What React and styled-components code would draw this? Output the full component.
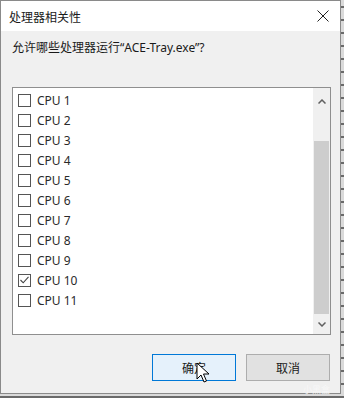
import React from "react";
import styled, { createGlobalStyle } from "styled-components";

const Global = createGlobalStyle`
  html, body { margin: 0; padding: 0; }
  body {
    width: 344px;
    height: 398px;
    overflow: hidden;
    background: #d6d6d6;
    font-family: "Noto Sans", "Noto Sans CJK SC", sans-serif;
  }
`;

/* ===== WINDOW ===== */
const Screen = styled.div`
  width: 344px;
  height: 398px;
  position: relative;
  background:
    repeating-linear-gradient(180deg, #dadada 0 6px, #6a6a6a 6px 8px, #dadada 8px 13px);
`;

const Dialog = styled.div`
  width: 339px;
  height: 392px;
  border: 1px solid #8a8a8a;
  background: #f0f0f0;
  display: flex;
  flex-direction: column;
`;

const TitleBar = styled.div`
  height: 30px;
  background: #ffffff;
  display: flex;
  align-items: center;
  justify-content: space-between;
  padding: 0 8px 0 8px;
  font-family: "Noto Sans CJK SC", sans-serif;
  font-size: 12px;
  color: #1a1a1a;
`;

const CloseBtn = styled.div`
  width: 14px;
  height: 14px;
  display: flex;
  align-items: center;
  justify-content: center;
  margin-right: 2px;
`;

const Body = styled.div`
  flex: 1;
  display: flex;
  flex-direction: column;
  padding: 9px 10px 0 11px;
`;

const Prompt = styled.div`
  font-family: "Noto Sans", "Noto Sans CJK SC", sans-serif;
  font-size: 12px;
  line-height: 16px;
  color: #1a1a1a;
  margin-bottom: 31px;
`;

/* ===== LIST ===== */
const ListBox = styled.div`
  width: 317px;
  height: 246px;
  border: 1px solid #8f8f8f;
  background: #ffffff;
  display: flex;
`;

const Rows = styled.div`
  flex: 1;
  padding-top: 2px;
`;

const Row = styled.div`
  height: 20px;
  display: flex;
  align-items: center;
  padding-left: 5px;
  gap: 6px;
  font-size: 12px;
  color: #2a2a2a;
`;

const Box = styled.div`
  width: 11px;
  height: 11px;
  border: 1px solid #555;
  background: #fff;
  display: flex;
  align-items: center;
  justify-content: center;
`;

const ScrollBar = styled.div`
  width: 17px;
  background: #f0f0f0;
  display: flex;
  flex-direction: column;
`;

const Arrow = styled.div`
  height: 20px;
  display: flex;
  align-items: center;
  justify-content: center;
`;

const Track = styled.div`
  flex: 1;
  padding: 30px 1px 0 1px;
  display: flex;
`;

const Thumb = styled.div`
  flex: 1;
  background: #cdcdcd;
`;

/* ===== FOOTER ===== */
const Footer = styled.div`
  display: flex;
  justify-content: flex-end;
  gap: 10px;
  padding: 19px 0 0 0;
  position: relative;
`;

const Button = styled.div`
  width: 82px;
  height: 25px;
  border: 1px solid ${p => (p.primary ? "#0078d7" : "#adadad")};
  background: ${p => (p.primary ? "#e5f1fb" : "#e1e1e1")};
  display: flex;
  align-items: center;
  justify-content: center;
  font-family: "Noto Sans CJK SC", sans-serif;
  font-size: 12px;
  color: #1a1a1a;
`;

const Cursor = styled.svg`
  position: absolute;
  left: 184px;
  top: 27px;
`;

const Watermark = styled.div`
  position: absolute;
  right: 0;
  top: 48px;
  font-family: "Noto Sans CJK SC", sans-serif;
  font-size: 9px;
  color: #fafafa;
  opacity: 0.8;
`;

const cpus = Array.from({ length: 11 }, (_, i) => i + 1);

export default function App() {
  return (
    <Screen>
      <Global />
      <Dialog>
        <TitleBar>
          <span>处理器相关性</span>
          <CloseBtn>
            <svg width="12" height="12" viewBox="0 0 12 12">
              <path d="M0.5 0.5 L11.5 11.5 M11.5 0.5 L0.5 11.5" stroke="#222" strokeWidth="1" fill="none" />
            </svg>
          </CloseBtn>
        </TitleBar>
        <Body>
          <Prompt>允许哪些处理器运行“ACE-Tray.exe”?</Prompt>
          <ListBox>
            <Rows>
              {cpus.map(n => (
                <Row key={n}>
                  <Box>
                    {n === 10 && (
                      <svg width="9" height="8" viewBox="0 0 9 8">
                        <path d="M0.5 4 L3.2 6.8 L8.5 0.8" stroke="#444" strokeWidth="1.1" fill="none" />
                      </svg>
                    )}
                  </Box>
                  <span>CPU {n}</span>
                </Row>
              ))}
            </Rows>
            <ScrollBar>
              <Arrow style={{ paddingTop: 3 }}>
                <svg width="8" height="5" viewBox="0 0 8 5">
                  <path d="M0.5 4.5 L4 1 L7.5 4.5" stroke="#606060" strokeWidth="1.5" fill="none" />
                </svg>
              </Arrow>
              <Track>
                <Thumb />
              </Track>
              <Arrow>
                <svg width="8" height="5" viewBox="0 0 8 5">
                  <path d="M0.5 0.5 L4 4 L7.5 0.5" stroke="#606060" strokeWidth="1.5" fill="none" />
                </svg>
              </Arrow>
            </ScrollBar>
          </ListBox>
          <Footer>
            <Button primary>确定</Button>
            <Button>取消</Button>
            <Cursor width="14" height="22" viewBox="0 0 14 22">
              <path d="M1 1 L1 17 L5 13 L8 20 L10.5 19 L7.5 12 L13 12 Z" fill="#fff" stroke="#000" strokeWidth="1" strokeLinejoin="round" />
            </Cursor>
            <Watermark>小黑盒</Watermark>
          </Footer>
        </Body>
      </Dialog>
    </Screen>
  );
}
